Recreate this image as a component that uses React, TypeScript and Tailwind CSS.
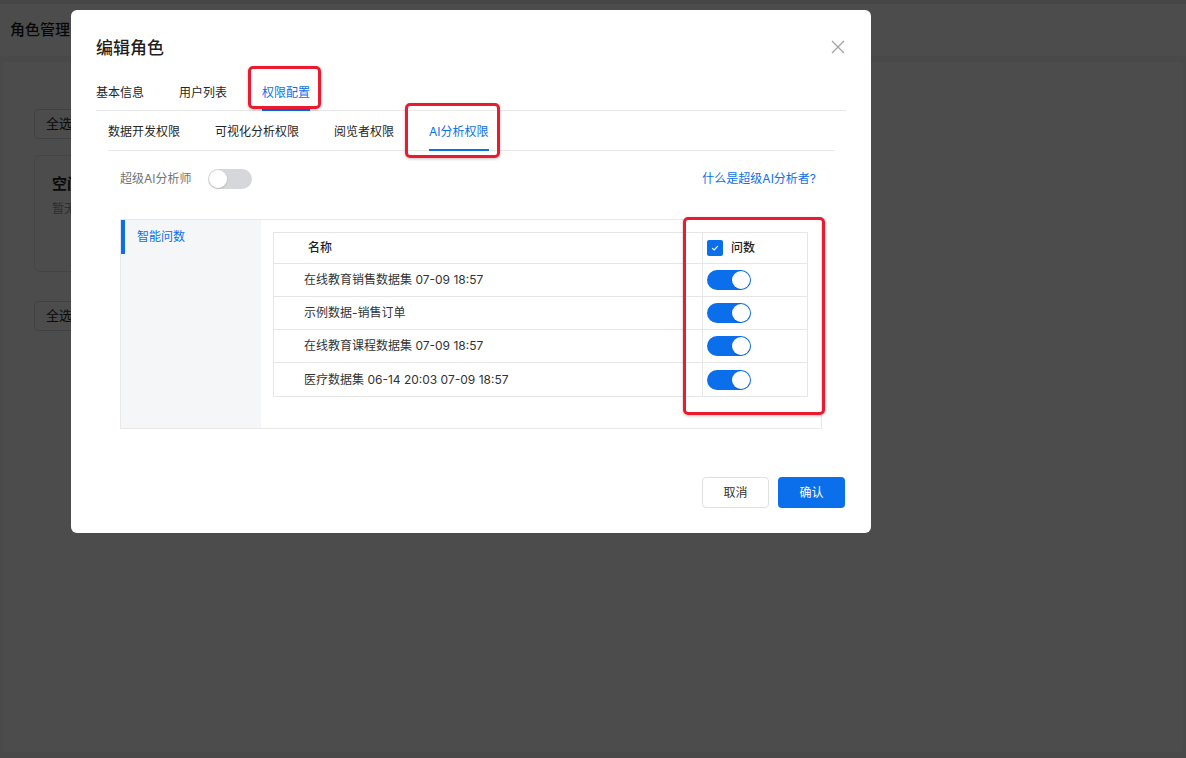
import { useState } from "react";

type Row = { name: string; on: boolean };

const rows: Row[] = [
  { name: "在线教育销售数据集 07-09 18:57", on: true },
  { name: "示例数据-销售订单", on: true },
  { name: "在线教育课程数据集 07-09 18:57", on: true },
  { name: "医疗数据集 06-14 20:03 07-09 18:57", on: true },
];

function Toggle({ on }: { on: boolean }) {
  return (
    <span
      className={`relative inline-block h-[20px] w-[44px] rounded-full ${
        on ? "bg-[#0b6fec]" : "bg-[#d6d7da]"
      }`}
    >
      <span
        className={`absolute top-[1px] h-[18px] w-[18px] rounded-full bg-white shadow-[0_1px_2px_rgba(0,0,0,0.15)] ${
          on ? "right-[1px]" : "left-[1px]"
        }`}
      />
    </span>
  );
}

function RedBox({ className }: { className: string }) {
  return (
    <div
      className={`pointer-events-none absolute rounded-[5px] border-[3px] border-[#ec1a2e] shadow-[0_1px_3px_rgba(0,0,0,0.25)] ${className}`}
    />
  );
}

export default function App() {
  const [tab, setTab] = useState("权限配置");
  const [sub, setSub] = useState("AI分析权限");

  const tabs = ["基本信息", "用户列表", "权限配置"];
  const subs = ["数据开发权限", "可视化分析权限", "阅览者权限", "AI分析权限"];

  return (
    <div className="relative h-[758px] w-[1186px] overflow-hidden bg-[#f4f5f7] font-['Inter','Noto_Sans_CJK_SC',sans-serif] text-[12px] text-[#262626]">
      {/* page behind the dialog */}
      <div className="h-[4px] bg-[#e9eaec]" />
      <div className="flex h-[52px] items-center bg-white px-[10px] text-[15px] font-medium text-[#1a1a1a]">
        角色管理
      </div>
      <div className="mx-[3px] mt-[6px] h-[690px] rounded-[4px] bg-white px-[31px] pt-[47px]">
        <div className="flex h-[30px] w-[80px] items-center rounded-[4px] border border-[#d9d9d9] px-[11px] text-[13px]">
          全选
        </div>
        <div className="mt-[16px] h-[117px] w-[300px] rounded-[6px] border border-[#e5e5e5] px-[17px] pt-[17px]">
          <div className="text-[15px] font-semibold">空间权限</div>
          <div className="mt-[4px] text-[12px] text-[#999]">暂无数据</div>
        </div>
        <div className="mt-[29px] flex h-[30px] w-[80px] items-center rounded-[4px] border border-[#d9d9d9] px-[11px] text-[13px]">
          全选
        </div>
      </div>

      {/* overlay */}
      <div className="absolute inset-0 bg-black/70" />

      {/* dialog */}
      <div className="absolute left-[71px] top-[10px] flex h-[523px] w-[800px] flex-col rounded-[6px] bg-white px-[25px] pt-[26px]">
        <div className="flex h-[24px] items-center justify-between">
          <span className="pt-[2px] text-[17px] font-medium text-[#1f1f1f]">编辑角色</span>
          <svg width="14" height="14" viewBox="0 0 14 14" className="mb-[2px] mr-[1px]">
            <path d="M1 1L13 13M13 1L1 13" stroke="#a3a3a3" strokeWidth="1.3" />
          </svg>
        </div>

        <div className="mt-[16px] flex h-[35px] gap-[35px] border-b border-[#e8e8e8]">
          {tabs.map((t) => (
            <button
              key={t}
              onClick={() => setTab(t)}
              className={`relative flex items-center text-[12px] ${
                tab === t ? "text-[#0b6fec]" : "text-[#262626]"
              }`}
            >
              {t}
              {tab === t && (
                <span className="absolute bottom-[-1px] left-0 right-0 h-[2px] bg-[#0b6fec]" />
              )}
            </button>
          ))}
        </div>

        <div className="mx-[12px] flex h-[40px] gap-[35px] border-b border-[#e8e8e8] pt-[2px]">
          {subs.map((t) => (
            <button
              key={t}
              onClick={() => setSub(t)}
              className={`relative flex items-center text-[12px] ${
                sub === t ? "text-[#0b6fec]" : "text-[#262626]"
              }`}
            >
              {t}
              {sub === t && (
                <span className="absolute bottom-[-1px] left-0 right-0 h-[2px] bg-[#0b6fec]" />
              )}
            </button>
          ))}
        </div>

        <div className="mx-[24px] mt-[18px] flex h-[20px] items-center justify-between">
          <div className="flex items-center gap-[16px]">
            <span className="text-[12px] text-[#737373]">超级AI分析师</span>
            <Toggle on={false} />
          </div>
          <a className="mr-[6px] text-[12px] text-[#0b6fec]">什么是超级AI分析者?</a>
        </div>

        <div className="mx-[24px] mt-[30px] flex h-[210px] border border-[#e8e8e8]">
          <div className="w-[140px] bg-[#f5f6f8]">
            <div className="flex h-[34px] items-center border-l-4 border-[#0b6fec] pl-[12px] text-[12px] text-[#0b6fec]">
              智能问数
            </div>
          </div>
          <div className="flex-1 pl-[12px] pr-[13px] pt-[12px]">
            <div className="border border-[#e6e6e6]">
              <div className="flex h-[31px] border-b border-[#e6e6e6]">
                <div className="flex w-[428px] items-center pl-[34px] font-medium text-[#1f1f1f]">
                  名称
                </div>
                <div className="flex flex-1 items-center gap-[8px] border-l border-[#e6e6e6] pl-[4px]">
                  <span className="flex h-[16px] w-[16px] items-center justify-center rounded-[2px] bg-[#0b6fec]">
                    <svg width="10" height="10" viewBox="0 0 10 10">
                      <path d="M2.2 5.2L4.2 7L7.8 3.2" fill="none" stroke="white" strokeWidth="1.1" />
                    </svg>
                  </span>
                  <span className="font-medium text-[#1f1f1f]">问数</span>
                </div>
              </div>
              {rows.map((r, i) => (
                <div
                  key={r.name}
                  className={`flex h-[33px] ${i < rows.length - 1 ? "border-b border-[#e6e6e6]" : ""}`}
                >
                  <div className="flex w-[428px] items-center pl-[30px] text-[#333]">{r.name}</div>
                  <div className="flex flex-1 items-center border-l border-[#e6e6e6] pl-[4px]">
                    <Toggle on={r.on} />
                  </div>
                </div>
              ))}
            </div>
          </div>
        </div>

        <div className="mt-auto mb-[25px] flex justify-end gap-[9px] pr-[1px]">
          <button className="h-[31px] w-[67px] rounded-[4px] border border-[#e0e0e0] text-[12px] text-[#333]">
            取消
          </button>
          <button className="h-[31px] w-[67px] rounded-[4px] bg-[#0b6fec] text-[12px] text-white">
            确认
          </button>
        </div>
      </div>

      {/* annotations */}
      <RedBox className="left-[248px] top-[66px] h-[43px] w-[73px]" />
      <RedBox className="left-[405px] top-[103px] h-[55px] w-[95px]" />
      <RedBox className="left-[683px] top-[217px] h-[198px] w-[142px]" />
    </div>
  );
}
